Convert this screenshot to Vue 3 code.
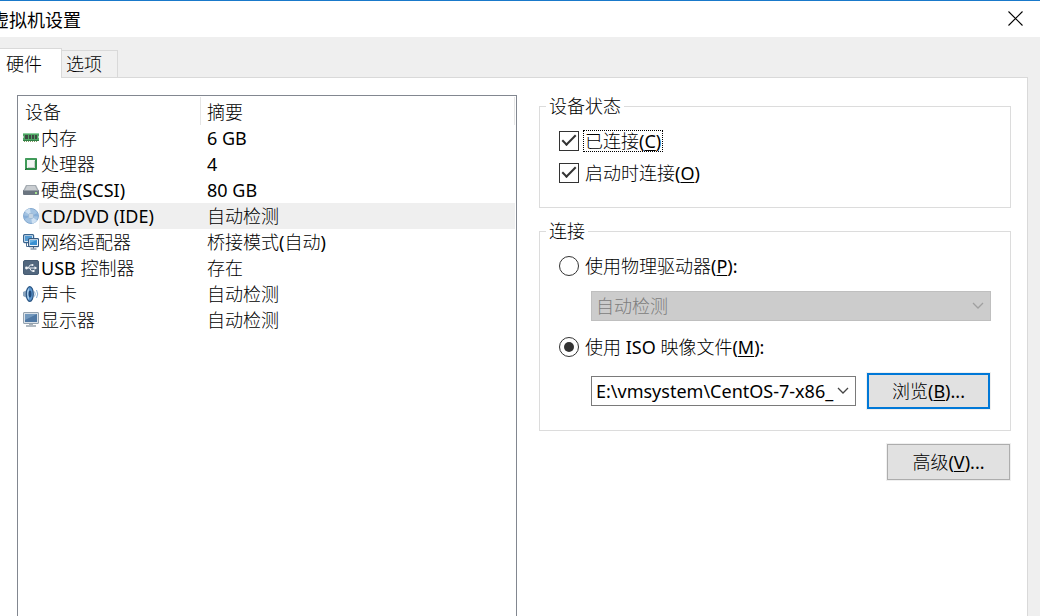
<script setup>
import { ref } from 'vue'

const devices = [
  { icon: 'memory', name: '内存', summary: '6 GB' },
  { icon: 'cpu', name: '处理器', summary: '4' },
  { icon: 'disk', name: '硬盘(SCSI)', summary: '80 GB' },
  { icon: 'cd', name: 'CD/DVD (IDE)', summary: '自动检测' },
  { icon: 'network', name: '网络适配器', summary: '桥接模式(自动)' },
  { icon: 'usb', name: 'USB 控制器', summary: '存在' },
  { icon: 'sound', name: '声卡', summary: '自动检测' },
  { icon: 'display', name: '显示器', summary: '自动检测' },
]
const selected = ref('cd')
const connected = ref(true)
const connectAtStart = ref(true)
const source = ref('iso')
</script>

<template>
  <div class="window">
    <header class="titlebar">
      <h1>虚拟机设置</h1>
      <button class="close" type="button" aria-label="关闭">
        <svg width="16" height="16" viewBox="0 0 16 16"><path d="M.5.5l14 14M14.500.5l-14 14" stroke="#000" stroke-width="1.1" fill="none" /></svg>
      </button>
    </header>

    <nav class="tabs" role="tablist">
      <button class="tab active" type="button" role="tab" aria-selected="true">硬件</button>
      <button class="tab" type="button" role="tab" aria-selected="false">选项</button>
    </nav>

    <main class="panel">
      <section class="list">
        <table>
          <colgroup><col class="c1" /><col /></colgroup>
          <thead>
            <tr>
              <th scope="col"><span>设备</span></th>
              <th scope="col"><span>摘要</span></th>
            </tr>
          </thead>
          <tbody>
            <tr v-for="d in devices" :key="d.icon" :class="{ selected: selected === d.icon }" @click="selected = d.icon">
              <td>
                <div class="device">
                  <svg class="icon" width="16" height="16" viewBox="0 0 16 16">
                    <g v-if="d.icon === 'memory'">
                      <path d="M0 3h16v3l-1 1 1 1v3H0V8l1-1-1-1z" fill="#4fa564" />
                      <path d="M0 3.500h16" stroke="#8fd0a0" />
                      <path d="M2 5h3v4H2zM6 5h2v4H6zM9 5h2v4H9zM12 5h2v4h-2z" fill="#3d4a42" />
                      <path d="M1 11.500h14" stroke="#7f9a62" stroke-width="1" stroke-dasharray="1 1" />
                      <path d="M0 10.500h16" stroke="#2f7f46" />
                    </g>
                    <g v-else-if="d.icon === 'cpu'">
                      <rect x="2" y="2" width="12" height="12" rx="1" fill="#2f8a49" />
                      <path d="M3 13V3h10" stroke="#55ad6c" fill="none" />
                      <rect x="4" y="4" width="8" height="8" fill="#f1f4f2" />
                      <path d="M5 11.500h6.500V5" stroke="#c6cfc9" fill="none" />
                      <path d="M2 14l2-2" stroke="#1d5f30" />
                    </g>
                    <g v-else-if="d.icon === 'disk'">
                      <path d="M3 3h10l3 6H0z" fill="#a4abb1" />
                      <path d="M4 4h8l2 4H2z" fill="#c9cdd1" />
                      <rect y="8" width="16" height="5" rx="1" fill="#6b7580" />
                      <path d="M1 8.500h14" stroke="#959da5" />
                      <path d="M12 11h2" stroke="#a3e08f" stroke-width="2" />
                    </g>
                    <g v-else-if="d.icon === 'cd'">
                      <circle cx="8" cy="8" r="7.500" fill="#a3c3e2" stroke="#84a9d0" />
                      <path d="M8 8L2 3.500a7.500 7.500 0 0 1 5-3zM8 8l6 4.500a7.500 7.500 0 0 1-5 3z" fill="#cfe1f2" />
                      <path d="M8 8l6.500-3a7.500 7.500 0 0 1 .5 3.500zM8 8l-6.500 3A7.500 7.500 0 0 1 1 7.500z" fill="#86aed8" />
                      <circle cx="8" cy="8" r="2.700" fill="#dce8f3" stroke="#91afce" stroke-width=".8" />
                      <circle cx="8" cy="8" r="1.200" fill="#fff" stroke="#8ba8c3" stroke-width=".7" />
                    </g>
                    <g v-else-if="d.icon === 'network'">
                      <rect x=".6" y=".6" width="10" height="8" rx="1" fill="#d5e6f4" stroke="#38648f" stroke-width="1.200" />
                      <rect x="2" y="2" width="7" height="5" fill="#5199d2" />
                      <path d="M3.500 9v3.500H6" stroke="#4f7195" fill="none" />
                      <rect x="5.600" y="4.600" width="10" height="8" rx="1" fill="#edf5fb" stroke="#365a81" stroke-width="1.200" />
                      <rect x="7" y="6" width="7" height="5" fill="#3890d2" />
                      <path d="M7 6h7l-7 3z" fill="#68b1e2" />
                      <path d="M10.500 13v1.500M7.500 15h6" stroke="#4c6884" />
                    </g>
                    <g v-else-if="d.icon === 'usb'">
                      <rect x=".5" y=".5" width="15" height="14" rx="1.500" fill="#52677e" stroke="#465b72" />
                      <path d="M3 8h9M5 8l2.200-3h2M6.500 8l2 3h2" stroke="#e8edf2" fill="none" />
                      <circle cx="3.500" cy="8" r="1.400" fill="#f4f6f8" />
                      <path d="M11.500 6.200l2.700 1.800-2.700 1.800z" fill="#f4f6f8" />
                      <circle cx="9.500" cy="5" r="1" fill="#f4f6f8" />
                      <rect x="9.500" y="10" width="2" height="2" fill="#f4f6f8" />
                    </g>
                    <g v-else-if="d.icon === 'sound'">
                      <path d="M0 6l3-1.500L6.500 0v16L3 11.500 0 10z" fill="#8ba5bf" />
                      <ellipse cx="6.800" cy="8" rx="3.500" ry="7.400" fill="#5b96cf" stroke="#2c5582" stroke-width="1.200" />
                      <path d="M6 2q-2 2-2 6t2 6z" fill="#a9cdec" />
                      <ellipse cx="7" cy="8" rx="1.500" ry="3.400" fill="#204a7b" />
                      <path d="M11.500 5.500q1.500 2.500 0 5M13.500 4q2.500 4 0 8" stroke="#8fb3d5" fill="none" />
                    </g>
                    <g v-else>
                      <rect x=".5" y=".5" width="15" height="11" rx=".5" fill="#d9e1e8" stroke="#94a2af" />
                      <rect x="2" y="2" width="12" height="8" fill="#4f78a4" />
                      <path d="M2 2h12L2 8z" fill="#7399be" />
                      <path d="M6 12.500h4" stroke="#a7b0b8" />
                      <path d="M3 14h10" stroke="#b0b9c1" stroke-width="2" />
                    </g>
                  </svg>
                  <span class="name">{{ d.name }}</span>
                </div>
              </td>
              <td class="summary">{{ d.summary }}</td>
            </tr>
          </tbody>
        </table>
      </section>

      <section class="settings">
        <fieldset class="status">
          <legend>设备状态</legend>
          <label class="option"><input v-model="connected" type="checkbox" /><span class="caption focused">已连接(<u>C</u>)</span></label>
          <label class="option"><input v-model="connectAtStart" type="checkbox" /><span class="caption">启动时连接(<u>O</u>)</span></label>
        </fieldset>

        <fieldset class="connection">
          <legend>连接</legend>
          <label class="option"><input v-model="source" type="radio" name="source" value="drive" /><span class="caption">使用物理驱动器(<u>P</u>):</span></label>
          <div class="row drive">
            <div class="combo">
              <select aria-label="物理驱动器" disabled><option>自动检测</option></select>
              <svg width="12" height="8" viewBox="0 0 12 8"><path d="M1 1l5 5 5-5" fill="none" stroke="#a0a0a0" stroke-width="1.300" /></svg>
            </div>
          </div>
          <label class="option"><input v-model="source" type="radio" name="source" value="iso" /><span class="caption">使用 ISO 映像文件(<u>M</u>):</span></label>
          <div class="row iso">
            <div class="combo">
              <select aria-label="ISO 映像文件"><option>E:\vmsystem\CentOS-7-x86_</option></select>
              <svg width="12" height="8" viewBox="0 0 12 8"><path d="M1 1l5 5 5-5" fill="none" stroke="#444" stroke-width="1.300" /></svg>
            </div>
            <button class="push default" type="button">浏览(<u>B</u>)...</button>
          </div>
        </fieldset>

        <button class="push advanced" type="button">高级(<u>V</u>)...</button>
      </section>
    </main>
  </div>
</template>

<style>
body {
  margin: 0;
  background: #efefef;
}
</style>

<style scoped>
.window {
  display: flex;
  flex-direction: column;
  box-sizing: border-box;
  height: 100vh;
  overflow: hidden;
  border-top: 1px solid #1979ca;
  background: #efefef;
  color: #000;
  font-family: "Noto Sans", "Noto Sans CJK SC Light", "Noto Sans CJK SC", sans-serif;
  font-size: 18px;
  line-height: 24px;
}
button,
select {
  font: inherit;
  color: inherit;
  border-radius: 0;
}
u {
  text-decoration-thickness: 1px;
  text-underline-offset: 2px;
}
.titlebar {
  display: flex;
  align-items: center;
  justify-content: space-between;
  height: 36px;
  flex: none;
  padding-right: 16px;
  background: #fff;
}
h1 {
  margin: 0 0 0 -9px;
  font-family: "Noto Sans CJK SC", sans-serif;
  font-size: 18px;
  font-weight: 400;
}
.close {
  display: flex;
  padding: 0;
  border: 0;
  background: none;
}
.tabs {
  display: flex;
  align-items: flex-end;
  flex: none;
  height: 40px;
}
.tab {
  box-sizing: border-box;
  height: 27px;
  padding: 0 15px 0 4px;
  border: 1px solid #d9d9d9;
  border-left: 0;
  border-bottom: 0;
  background: #f0f0f0;
}
.tab.active {
  z-index: 1;
  height: 30px;
  margin-bottom: -1px;
  padding: 0 19px 0 6px;
  background: #fff;
}
.panel {
  display: grid;
  flex: 1;
  grid-template-columns: 500fr 472fr;
  gap: 22px;
  min-height: 0;
  margin-right: 12px;
  padding: 17px 16px 0 17px;
  border: 1px solid #d9d9d9;
  border-width: 1px 1px 0 0;
  background: #fff;
}
.list {
  padding-right: 1px;
  border: 1px solid #828790;
  border-bottom: 0;
}
table {
  width: 100%;
  border-collapse: collapse;
  table-layout: fixed;
}
.c1 {
  width: 183px;
}
th {
  height: 29px;
  padding: 0;
  font-weight: 400;
  text-align: left;
}
th span {
  display: block;
  height: 28px;
  padding-left: 7px;
  border-right: 1px solid #e5e5e5;
  line-height: 30px;
}
th + th span {
  padding-left: 6px;
}
td {
  height: 26px;
  padding: 0;
  line-height: 26px;
  white-space: nowrap;
}
.device {
  display: flex;
  align-items: center;
  padding-left: 5px;
}
.icon {
  flex: none;
}
.name {
  flex: 1;
  padding-left: 2px;
}
.summary {
  padding-left: 6px;
}
.selected .name,
.selected .summary {
  background: #efefef;
}
.settings {
  display: flex;
  flex-direction: column;
  gap: 12px;
}
fieldset {
  min-width: 0;
  margin: 0;
  border: 1px solid #dcdcdc;
}
.status {
  padding: 8px 19px 18px 6px;
}
.connection {
  padding: 8px 19px 21px 6px;
}
legend {
  padding: 0 3px;
  line-height: 22px;
}
.option {
  display: flex;
  align-items: center;
  gap: 4px;
  height: 32px;
  padding-left: 13px;
}
.option input {
  display: grid;
  place-content: center;
  appearance: none;
  box-sizing: border-box;
  width: 20px;
  height: 20px;
  margin: 0;
  border: 1px solid #333;
  background: #fff;
}
.option input[type="radio"] {
  border-radius: 50%;
}
.option input[type="radio"]:checked::before {
  content: "";
  width: 10px;
  height: 10px;
  border-radius: 50%;
  background: #333;
}
.option input[type="checkbox"]:checked::before {
  content: "";
  width: 14px;
  height: 7px;
  margin-bottom: 5px;
  border: solid #333;
  border-width: 0 0 2px 2px;
  box-sizing: border-box;
  transform: rotate(-45deg);
}
.caption {
  padding: 0 1px;
  border: 1px solid transparent;
  line-height: 20px;
}
.focused {
  border: 1px dotted #000;
}
.row {
  display: flex;
  align-items: center;
  gap: 11px;
  padding-left: 45px;
}
.drive {
  margin: 9px 0 10px;
}
.iso {
  margin-top: 10px;
  padding-right: 1px;
}
.combo {
  position: relative;
  flex: 1;
  min-width: 0;
}
.combo select {
  display: block;
  appearance: none;
  box-sizing: border-box;
  width: 100%;
  height: 30px;
  padding: 0 20px 0 4px;
  border: 1px solid #7a7a7a;
  background: #fff;
}
.combo select:disabled {
  border-color: #bfbfbf;
  background: #ccc;
  color: #7d7d7d;
  opacity: 1;
}
.combo svg {
  position: absolute;
  top: 11px;
  right: 7px;
  pointer-events: none;
}
.push {
  box-sizing: border-box;
  width: 123px;
  height: 36px;
  padding: 0;
  border: 1px solid #adadad;
  background: #e1e1e1;
  box-shadow: 0 0 0 1px #f0f0f0;
}
.default {
  border: 2px solid #0078d7;
}
.advanced {
  align-self: flex-end;
  margin: 1px 1px 0 0;
}
</style>
